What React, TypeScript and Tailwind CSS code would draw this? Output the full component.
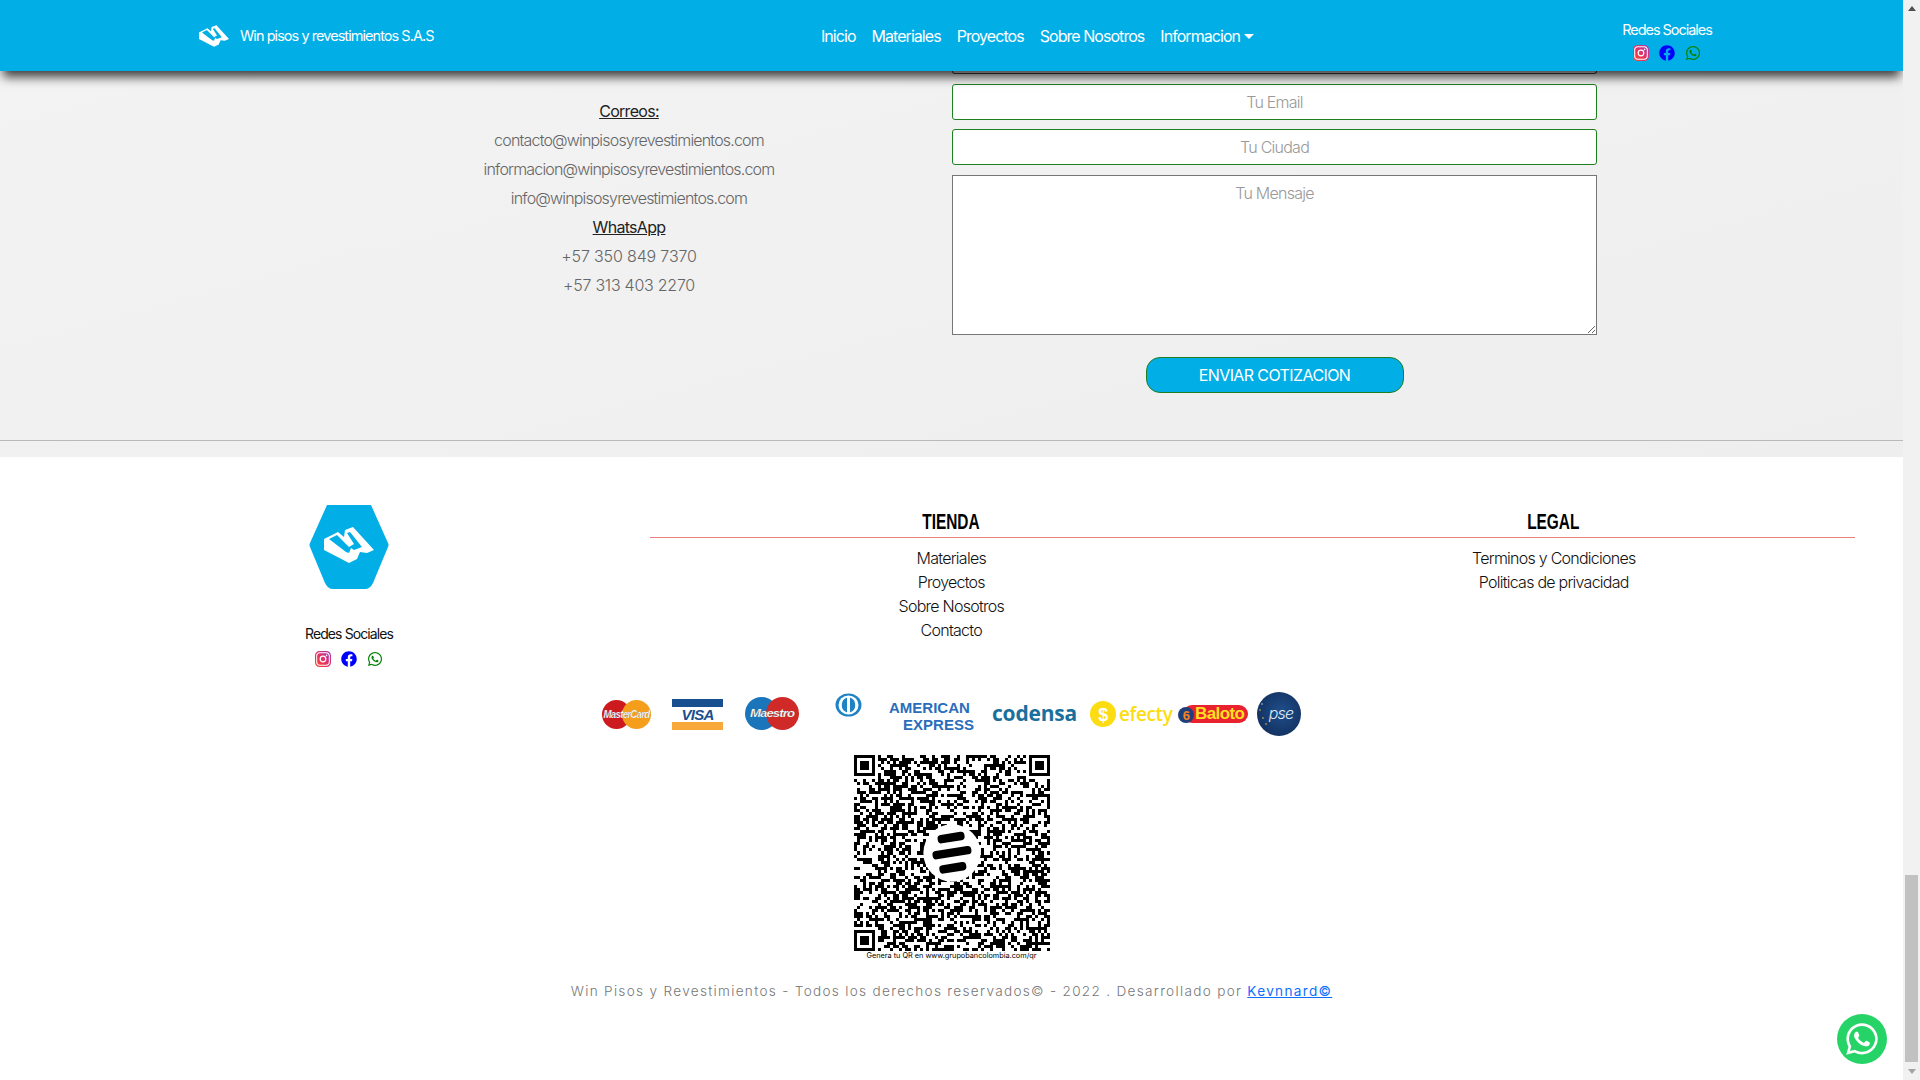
import React, { useMemo } from "react";
import { FaFacebook, FaWhatsapp } from "react-icons/fa";

const TileLogo = ({ className }: { className: string }) => (
  <svg viewBox="0 0 50 36" className={className}>
    <path
      fill="#fff"
      d="M0 12 14 5l6 5 1-7 8-3 21 23-7 3-7-1-3 7-8 4L0 23z"
    />
    <path
      fill="#02aee6"
      d="M5 12 13 8l12 12 5-3-7-11 3-1 12 15-8 3-3-2-2 5-3-1z"
    />
  </svg>
);

const Instagram = () => (
  <svg viewBox="0 0 16 16" className="w-4 h-4">
    <defs>
      <linearGradient id="ig" x1="0" y1="1" x2="1" y2="0">
        <stop offset="0" stopColor="#f9423a" />
        <stop offset="0.55" stopColor="#e1306c" />
        <stop offset="1" stopColor="#a13ab4" />
      </linearGradient>
    </defs>
    <rect x="0.6" y="0.6" width="14.8" height="14.8" rx="4" fill="#fff" stroke="url(#ig)" strokeWidth="1.2" />
    <rect x="2.2" y="2.2" width="11.6" height="11.6" rx="3" fill="url(#ig)" />
    <circle cx="8" cy="8" r="2.8" fill="none" stroke="#fff" strokeWidth="1.2" />
    <circle cx="11.6" cy="4.4" r="0.8" fill="#fff" />
  </svg>
);

const SocialIcons = () => (
  <div className="flex items-center justify-center gap-[10px]">
    <Instagram />
    <FaFacebook className="w-4 h-4 text-[#0000ff]" />
    <FaWhatsapp className="w-4 h-4 text-[#008000]" />
  </div>
);

const QrCode = () => {
  const d = useMemo(() => {
    const n = 65;
    let seed = 20221;
    let out = "";
    const inFinder = (x: number, y: number) =>
      (x < 8 && y < 8) || (x >= n - 8 && y < 8) || (x < 8 && y >= n - 8);
    for (let y = 0; y < n; y++) {
      for (let x = 0; x < n; x++) {
        seed = (seed * 1103515245 + 12345) & 0x7fffffff;
        if (inFinder(x, y)) continue;
        if (((seed >> 16) & 7) > 3) out += `M${x} ${y}h1v1h-1z`;
      }
    }
    return out;
  }, []);

  const finder = (x: number, y: number) => (
    <g key={`${x}-${y}`}>
      <rect x={x} y={y} width="7" height="7" fill="#000" />
      <rect x={x + 1} y={y + 1} width="5" height="5" fill="#fff" />
      <rect x={x + 2} y={y + 2} width="3" height="3" fill="#000" />
    </g>
  );

  return (
    <svg viewBox="0 0 65 65" className="w-[196px] h-[196px] block" shapeRendering="crispEdges">
      <path d={d} fill="#000" />
      {finder(0, 0)}
      {finder(58, 0)}
      {finder(0, 58)}
      <g shapeRendering="auto">
        <circle cx="32.5" cy="32.5" r="9.5" fill="#fff" />
        <g transform="rotate(-9 32.5 32.5)" fill="#000">
          <rect x="28.5" y="26" width="9" height="2.8" rx="1.2" />
          <rect x="26" y="31" width="13" height="2.8" rx="1.2" />
          <rect x="27.5" y="36" width="9" height="2.8" rx="1.2" />
        </g>
      </g>
    </svg>
  );
};

const PaymentLogos = () => (
  <div className="flex items-start justify-center h-[44px]">
    {/* mastercard */}
    <svg viewBox="0 0 49 29" className="w-[49px] h-[29px] mt-[8px]">
      <circle cx="14.5" cy="14.5" r="14.5" fill="#cc1a1f" />
      <circle cx="34.5" cy="14.5" r="14.5" fill="#f59e1c" />
      <text x="24.5" y="18" textAnchor="middle" fontSize="10" fontStyle="italic" fontWeight="700" fill="#fff" stroke="#777" strokeWidth="0.2" fontFamily="Liberation Sans, sans-serif" textLength="46" lengthAdjust="spacingAndGlyphs">MasterCard</text>
    </svg>
    {/* visa */}
    <svg viewBox="0 0 51 31" className="w-[51px] h-[31px] mt-[7px] ml-[21px]">
      <rect width="51" height="8" fill="#1a4f8f" />
      <rect y="23" width="51" height="8" fill="#f9a83c" />
      <text x="25.5" y="21" textAnchor="middle" fontSize="15" fontStyle="italic" fontWeight="700" fill="#1a4f8f" fontFamily="Liberation Sans, sans-serif">VISA</text>
    </svg>
    {/* maestro */}
    <svg viewBox="0 0 54 33" className="w-[54px] h-[33px] mt-[5px] ml-[22px]">
      <circle cx="16.5" cy="16.5" r="16.5" fill="#1a75bb" />
      <circle cx="37.5" cy="16.5" r="16.5" fill="#cf2a27" />
      <text x="27" y="20" textAnchor="middle" fontSize="10.5" fontStyle="italic" fontWeight="700" fill="#fff" stroke="#666" strokeWidth="0.2" fontFamily="Liberation Sans, sans-serif" textLength="44" lengthAdjust="spacingAndGlyphs">Maestro</text>
    </svg>
    {/* diners */}
    <svg viewBox="0 0 27 24" className="w-[27px] h-[24px] mt-[1px] ml-[36px]">
      <ellipse cx="13.5" cy="12" rx="13" ry="11.5" fill="#1d83c4" />
      <ellipse cx="13.5" cy="12" rx="10" ry="9.5" fill="#fff" />
      <path d="M12 4.5v15a8 8 0 0 1 0-15zM15 4.5v15a8 8 0 0 0 0-15z" fill="#1d83c4" />
    </svg>
    {/* amex */}
    <div className="w-[85px] h-[34px] mt-[7px] ml-[27px] flex flex-col text-[#2a6ebb] font-bold text-[15px] leading-[17px] [font-family:'Liberation_Sans',sans-serif] tracking-[0px]">
      <span className="whitespace-nowrap">AMERICAN</span>
      <span className="text-right whitespace-nowrap">EXPRESS</span>
    </div>
    {/* codensa */}
    <span className="ml-[18px] mt-[8px] text-[#1b6f9c] font-bold text-[21px] leading-[26px] [font-family:'Open_Sans',sans-serif] tracking-[-0.2px]">
      codensa
    </span>
    {/* efecty */}
    <div className="ml-[13px] mt-[9px] w-[80px] flex items-center">
      <svg viewBox="0 0 26 26" className="w-[26px] h-[26px] shrink-0">
        <circle cx="13" cy="13" r="13" fill="#fddc12" />
        <text x="13" y="19.5" textAnchor="middle" fontSize="18" fontWeight="700" fill="#fff" fontFamily="Liberation Sans, sans-serif">$</text>
      </svg>
      <span className="ml-[3px] text-[#fddc12] font-semibold text-[19px] leading-[26px] tracking-[-0.4px] [font-family:'Open_Sans',sans-serif]">
        efecty
      </span>
    </div>
    {/* baloto */}
    <div className="ml-[8px] mt-[10px] w-[70px] h-[23px] relative">
      <div className="absolute left-[5px] top-[3px] w-[65px] h-[18px] rounded-[9px] bg-[#e8222e]" />
      <div className="absolute left-0 top-[5px] w-[16px] h-[16px] rounded-full bg-[#1f3f7a] flex items-center justify-center text-[#f5821f] font-bold text-[13px] leading-none [font-family:'Liberation_Sans',sans-serif]">
        6
      </div>
      <span className="absolute left-[17px] top-[2px] text-[#fde021] font-bold text-[17px] leading-[20px] tracking-[-0.6px] [font-family:'Liberation_Sans',sans-serif]">
        Baloto
      </span>
    </div>
    {/* pse */}
    <svg viewBox="0 0 44 44" className="ml-[9px] w-[44px] h-[44px]">
      <defs>
        <radialGradient id="pse" cx="0.55" cy="0.45" r="0.6">
          <stop offset="0" stopColor="#1f4f8c" />
          <stop offset="1" stopColor="#12305f" />
        </radialGradient>
      </defs>
      <circle cx="22" cy="22" r="22" fill="url(#pse)" />
      <circle cx="3" cy="18" r="0.8" fill="#e8c23a" />
      <circle cx="6" cy="26" r="0.8" fill="#e8c23a" />
      <circle cx="9" cy="32" r="0.8" fill="#e8c23a" />
      <circle cx="5" cy="12" r="0.8" fill="#c9d4e8" />
      <text x="24" y="27" textAnchor="middle" fontSize="16" fontStyle="italic" fontWeight="300" fill="#dfe8f5" fontFamily="Inter, sans-serif">pse</text>
    </svg>
  </div>
);

const App: React.FC = () => {
  return (
    <div className="w-screen h-screen overflow-hidden flex bg-white relative [font-family:Inter,sans-serif] font-light tracking-[-0.75px]">
      <div className="flex-1 min-w-0 flex flex-col">
        {/* navbar */}
        <nav className="h-[71px] shrink-0 bg-[#02aee6] text-white flex items-center relative z-10 shadow-[0_9px_10px_-3px_rgba(0,0,0,0.75)]">
          <div className="w-[821px] pl-[199px] flex items-center gap-[11px] shrink-0">
            <TileLogo className="w-[30px] h-[22px]" />
            <span className="text-[14.5px] font-normal tracking-[-0.95px]">Win pisos y revestimientos S.A.S</span>
          </div>
          <ul className="flex items-center gap-4 text-[16px] font-normal tracking-[-0.95px] mt-[1px]">
            <li>Inicio</li>
            <li>Materiales</li>
            <li>Proyectos</li>
            <li>Sobre Nosotros</li>
            <li className="flex items-center gap-[4px]">
              Informacion
              <span className="w-0 h-0 border-x-[5px] border-x-transparent border-t-[5px] border-t-white" />
            </li>
          </ul>
          <div className="ml-[348px] w-[130px] flex flex-col items-center gap-[5px] pt-[9px]">
            <span className="text-[14.5px] font-normal tracking-[-1.05px] leading-[20px]">Redes Sociales</span>
            <SocialIcons />
          </div>
        </nav>

        {/* contacto */}
        <section className="bg-[linear-gradient(165deg,#f3f3f3,#eeeeee)] pb-4 shrink-0">
          <div className="flex pl-[320px] pb-[47px] border-b border-[#b9b9b9]">
            <div className="w-[618px] shrink-0 pt-[26px] text-center text-[16px] leading-[29px] text-[#666] tracking-[-0.82px]">
              <p className="text-[#222] font-normal underline tracking-[-0.7px]">Correos:</p>
              <p>contacto@winpisosyrevestimientos.com</p>
              <p>informacion@winpisosyrevestimientos.com</p>
              <p>info@winpisosyrevestimientos.com</p>
              <p className="text-[#222] font-normal underline tracking-[-0.7px]">WhatsApp</p>
              <p className="tracking-[-0.15px]">+57 350 849 7370</p>
              <p className="tracking-[-0.25px]">+57 313 403 2270</p>
            </div>
            <form className="ml-[14px] w-[645px] flex flex-col">
              <div className="h-[3px] border-x border-b border-[#444] rounded-b-[3px] bg-white" />
              <input
                placeholder="Tu Email"
                className="mt-[10px] h-[36px] border border-[#1f7f1f] rounded-[3px] bg-white text-center text-[16px] placeholder:text-[#999]"
              />
              <input
                placeholder="Tu Ciudad"
                className="mt-[9px] h-[36px] border border-[#1f7f1f] rounded-[3px] bg-white text-center text-[16px] placeholder:text-[#999]"
              />
              <textarea
                placeholder="Tu Mensaje"
                className="mt-[10px] h-[160px] block border border-[#767676] bg-white text-center text-[16px] pt-[5px] placeholder:text-[#999]"
              />
              <button
                type="button"
                className="self-center mt-[22px] w-[258px] h-[36px] rounded-[14px] border border-[#1f7f1f] bg-[#02aee6] text-white text-[16px] font-normal tracking-[-0.6px]"
              >
                ENVIAR COTIZACION
              </button>
            </form>
          </div>
        </section>

        {/* footer */}
        <footer className="flex-1 flex flex-col text-[#111]">
          <div className="flex h-[187px] shrink-0">
            <div className="w-[650px] pl-12 pt-[48px] flex flex-col items-center shrink-0">
              <svg viewBox="0 0 80 84" className="w-[80px] h-[84px] shrink-0">
                <path
                  d="M18 0H62L79 38Q80 40 79 42L64 78Q61 84 56 84H24Q19 84 16 78L1 42Q0 40 1 38Z"
                  fill="#02aee6"
                />
                <g transform="translate(15 22)">
                  <path fill="#fff" d="M0 12 14 5l6 5 1-7 8-3 21 23-7 3-7-1-3 7-8 4L0 23z" />
                  <path fill="#02aee6" d="M5 12 13 8l12 12 5-3-7-11 3-1 12 15-8 3-3-2-2 5-3-1z" />
                </g>
              </svg>
              <span className="mt-[35px] text-[14px] leading-[20px] font-normal tracking-[-0.9px] shrink-0">Redes Sociales</span>
              <div className="mt-[7px] shrink-0">
                <SocialIcons />
              </div>
            </div>
            <div className="w-[1205px] shrink-0 pt-[50px]">
              <div className="grid grid-cols-2 border-b border-[#ea7f7f] h-[31px]">
                <h5 className="text-center text-[22px] leading-[30px] font-bold text-black tracking-normal [font-family:'Liberation_Sans',sans-serif]">
                  <span className="inline-block scale-x-[0.7]">TIENDA</span>
                </h5>
                <h5 className="text-center text-[22px] leading-[30px] font-bold text-black tracking-normal [font-family:'Liberation_Sans',sans-serif]">
                  <span className="inline-block scale-x-[0.7]">LEGAL</span>
                </h5>
              </div>
              <div className="grid grid-cols-2 pt-[8px] text-center text-[16px] leading-[24px]">
                <ul>
                  <li>Materiales</li>
                  <li>Proyectos</li>
                  <li>Sobre Nosotros</li>
                  <li>Contacto</li>
                </ul>
                <ul>
                  <li>Terminos y Condiciones</li>
                  <li>Politicas de privacidad</li>
                </ul>
              </div>
            </div>
          </div>

          <div className="mt-[48px]">
            <PaymentLogos />
          </div>

          <div className="mt-[19px] flex flex-col items-center">
            <QrCode />
            <span className="text-[7.3px] leading-[9px] font-normal tracking-normal text-black">
              Genera tu QR en www.grupobancolombia.com/qr
            </span>
          </div>

          <p className="mt-[21px] text-center text-[13.6px] leading-[20px] tracking-[1.3px] text-[#777]">
            Win Pisos y Revestimientos - Todos los derechos reservados© - 2022 . Desarrollado por{" "}
            <a className="text-[#0d6efd] underline font-normal">Kevnnard©</a>
          </p>
        </footer>
      </div>

      {/* scrollbar */}
      <div className="w-[17px] shrink-0 bg-[#f1f1f1] flex flex-col items-center justify-between py-[6px] relative z-20">
        <span className="w-0 h-0 border-x-[4px] border-x-transparent border-b-[5px] border-b-[#505050]" />
        <div className="w-[13px] h-[187px] bg-[#c1c1c1] mt-auto mb-[7px]" />
        <span className="w-0 h-0 border-x-[4px] border-x-transparent border-t-[5px] border-t-[#a3a3a3]" />
      </div>

      {/* whatsapp flotante */}
      <div className="absolute left-[1837px] top-[1014px] w-[50px] h-[50px] rounded-full bg-[#25d366] flex items-center justify-center z-30">
        <FaWhatsapp className="w-[36px] h-[36px] text-white" />
      </div>
    </div>
  );
};

export default App;
